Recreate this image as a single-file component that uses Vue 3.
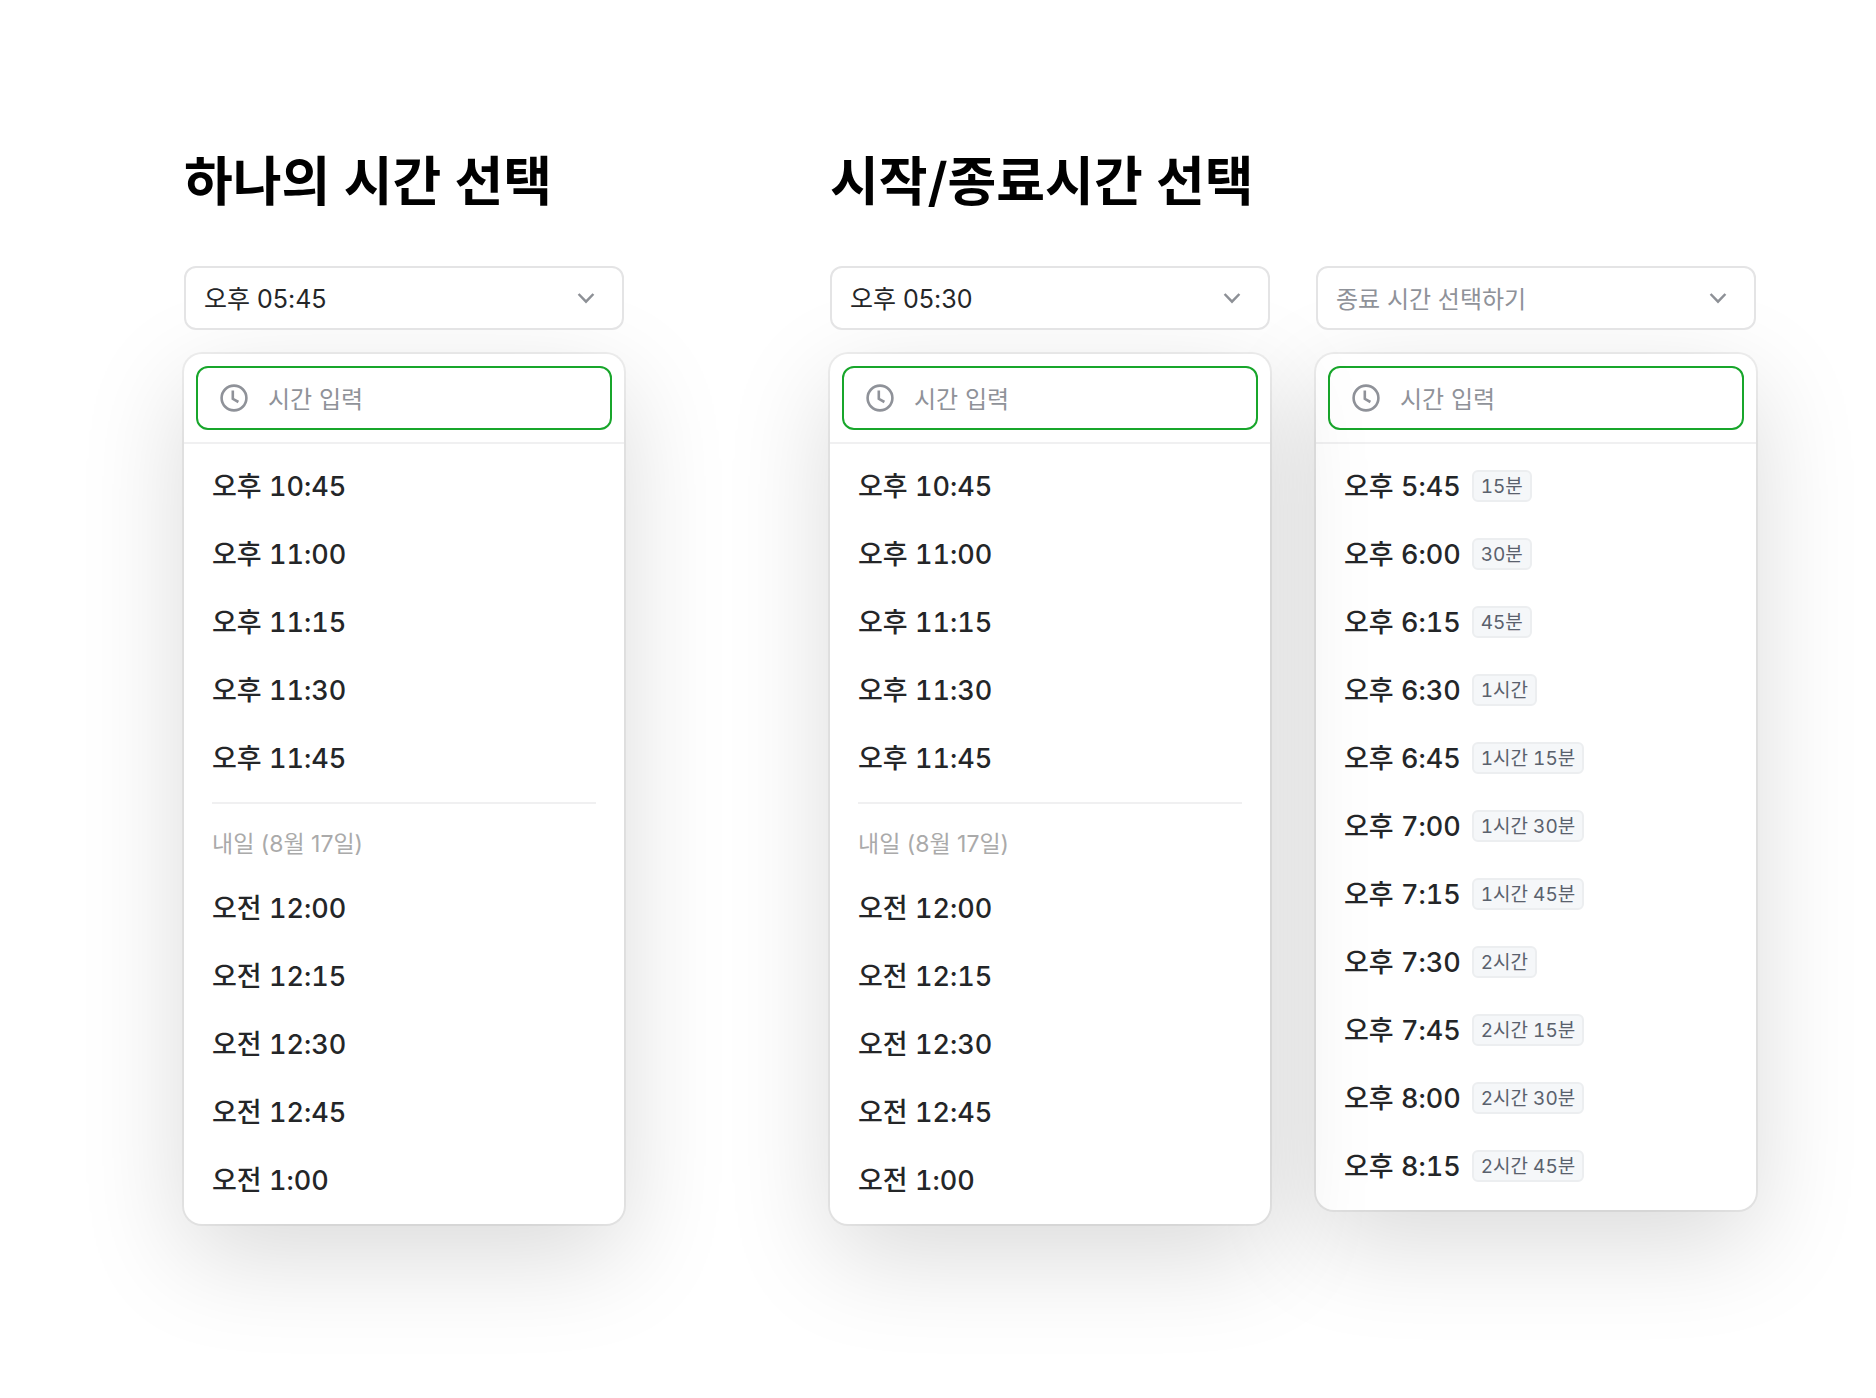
<script setup>
import { ref } from 'vue'

const evening = ['오후 10:45', '오후 11:00', '오후 11:15', '오후 11:30', '오후 11:45']
const tomorrow = ['오전 12:00', '오전 12:15', '오전 12:30', '오전 12:45', '오전 1:00']

const dayGroups = [
  { times: evening.map((time) => ({ time })) },
  { label: '내일 (8월 17일)', times: tomorrow.map((time) => ({ time })) },
]

const endGroups = [
  {
    times: [
      { time: '오후 5:45', duration: '15분' },
      { time: '오후 6:00', duration: '30분' },
      { time: '오후 6:15', duration: '45분' },
      { time: '오후 6:30', duration: '1시간' },
      { time: '오후 6:45', duration: '1시간 15분' },
      { time: '오후 7:00', duration: '1시간 30분' },
      { time: '오후 7:15', duration: '1시간 45분' },
      { time: '오후 7:30', duration: '2시간' },
      { time: '오후 7:45', duration: '2시간 15분' },
      { time: '오후 8:00', duration: '2시간 30분' },
      { time: '오후 8:15', duration: '2시간 45분' },
    ],
  },
]

const sections = ref([
  {
    id: 'single',
    title: '하나의 시간 선택',
    pickers: [{ id: 'time', label: '시간', initial: '오후 05:45', value: '오후 05:45', query: '', groups: dayGroups }],
  },
  {
    id: 'range',
    title: '시작/종료시간 선택',
    pickers: [
      { id: 'start', label: '시작 시간', initial: '오후 05:30', value: '오후 05:30', query: '', groups: dayGroups },
      { id: 'end', label: '종료 시간', placeholder: '종료 시간 선택하기', value: '', query: '', groups: endGroups },
    ],
  },
])
</script>

<template>
  <main class="page">
    <section v-for="section in sections" :key="section.id" class="section" :class="section.id">
      <h1 class="title">{{ section.title }}</h1>
      <div class="pickers">
        <div v-for="picker in section.pickers" :key="picker.id" class="picker">
          <div class="field">
            <select
              v-model="picker.value"
              class="select"
              :class="{ empty: !picker.value }"
              :aria-label="picker.label"
            >
              <option v-if="picker.placeholder" value="" disabled>{{ picker.placeholder }}</option>
              <option v-else :value="picker.initial">{{ picker.initial }}</option>
              <template v-for="(group, g) in picker.groups" :key="g">
                <option v-for="item in group.times" :key="item.time" :value="item.time">{{ item.time }}</option>
              </template>
            </select>
            <svg class="chevron" viewBox="0 0 20 20" aria-hidden="true">
              <path d="M2.6 6 10 13.6 17.4 6" />
            </svg>
          </div>

          <div class="panel">
            <div class="search">
              <label class="search-box">
                <svg class="clock" viewBox="0 0 28 28" aria-hidden="true">
                  <circle cx="14" cy="14" r="12.4" />
                  <path d="M12.8 6.4V14.8l5.6 3.2" />
                </svg>
                <input v-model="picker.query" class="input" type="text" placeholder="시간 입력" aria-label="시간 입력" />
              </label>
            </div>
            <div class="list">
              <div v-for="(group, g) in picker.groups" :key="g" class="group">
                <p v-if="group.label" class="day">{{ group.label }}</p>
                <ul class="times">
                  <li v-for="item in group.times" :key="item.time">
                    <button class="time" type="button" @click="picker.value = item.time">
                      <span class="clock-time">{{ item.time }}</span>
                      <span v-if="item.duration" class="badge">{{ item.duration }}</span>
                    </button>
                  </li>
                </ul>
              </div>
            </div>
          </div>
        </div>
      </div>
    </section>
  </main>
</template>

<style>
body {
  background: #fff;
}
</style>

<style scoped>
* {
  box-sizing: border-box;
}

.page {
  display: flex;
  align-items: flex-start;
  gap: 206px;
  padding: 146px 120px 174px 184px;
  font-family: Inter, "Noto Sans CJK KR", sans-serif;
  color: #242628;
}

.section {
  flex: 1 1 0;
  min-width: 0;
}

.section.range {
  flex: 2 1 46px;
}

.title {
  margin: 0 0 48px;
  font-size: 53px;
  line-height: 72px;
  font-weight: 600;
  color: #000;
  white-space: nowrap;
}

.pickers {
  display: flex;
  align-items: flex-start;
  gap: 46px;
}

.picker {
  flex: 1 1 0;
  min-width: 0;
}

.field {
  position: relative;
  z-index: 3;
  display: flex;
  align-items: center;
}

.select {
  width: 100%;
  height: 64px;
  padding: 2px 60px 0 18px;
  appearance: none;
  border: 2px solid #e4e4e5;
  border-radius: 12px;
  background: #fff;
  font: inherit;
  font-size: 25px;
  color: inherit;
}

.select.empty {
  font-size: 24px;
  color: #8f9299;
}

.chevron {
  position: absolute;
  right: 28px;
  width: 20px;
  height: 20px;
  fill: none;
  stroke: #8d9096;
  stroke-width: 2.5;
  pointer-events: none;
}

.panel {
  position: relative;
  z-index: 1;
  margin-top: 24px;
  border-radius: 18px;
  background: #fff;
  box-shadow: 0 0 0 2px rgba(0, 0, 0, 0.06), 0 32px 104px rgba(0, 0, 0, 0.15);
}

.picker:first-child .panel {
  z-index: 2;
}

.search {
  padding: 12px;
  border-bottom: 2px solid #f0f0f1;
}

.search-box {
  display: flex;
  align-items: center;
  gap: 20px;
  height: 64px;
  padding: 0 22px;
  border: 2px solid #18a62b;
  border-radius: 12px;
}

.clock {
  flex: none;
  width: 28px;
  height: 28px;
  fill: none;
  stroke: #8f9299;
  stroke-width: 2.6;
}

.input {
  flex: 1;
  min-width: 0;
  padding: 2px 0 0;
  border: 0;
  outline: 0;
  background: none;
  font: inherit;
  font-size: 24px;
  color: inherit;
}

.input::placeholder {
  color: #8f9299;
  opacity: 1;
}

.list {
  padding: 8px 28px 10px;
}

.group + .group {
  margin-top: 10px;
  border-top: 2px solid #f0f0f1;
}

.day {
  margin: 0;
  padding: 24px 0 14px;
  font-size: 23px;
  line-height: 32px;
  color: #aaa;
}

.times {
  margin: 0;
  padding: 0;
  list-style: none;
}

.time {
  display: flex;
  align-items: center;
  gap: 11px;
  width: 100%;
  height: 68px;
  padding: 0;
  border: 0;
  background: none;
  font: inherit;
  font-size: 27px;
  font-weight: 500;
  font-variant-numeric: tabular-nums;
  color: inherit;
  text-align: left;
  cursor: pointer;
}

.clock-time {
  padding-bottom: 3px;
}

.badge {
  height: 32px;
  padding: 0 7px;
  border: 2px solid #eceef0;
  border-radius: 6px;
  background: #f5f7f9;
  font-size: 19px;
  line-height: 30px;
  font-weight: 400;
  color: #5a616d;
}

@media (max-width: 1200px) {
  .page {
    flex-direction: column;
    align-items: stretch;
    gap: 120px;
    padding: 72px 48px 144px;
  }

  .section,
  .section.range {
    flex: none;
  }
}
</style>
